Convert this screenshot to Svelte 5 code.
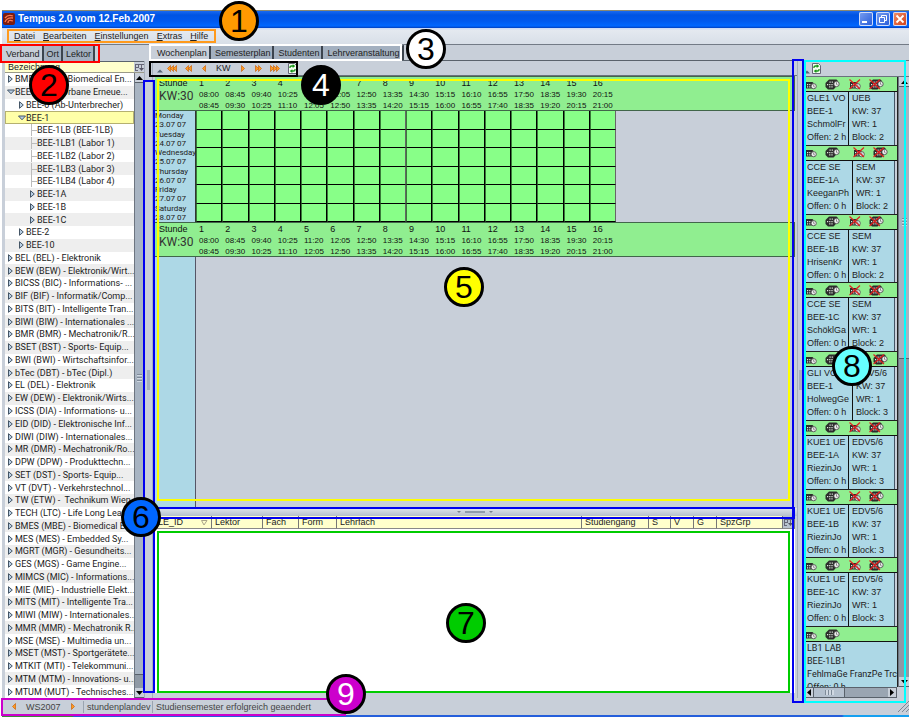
<script>
  const menus = ['Datei', 'Bearbeiten', 'Einstellungen', 'Extras', 'Hilfe'];
  const leftTabs = ['Verband', 'Ort', 'Lektor'];
  const mainTabs = ['Wochenplan', 'Semesterplan', 'Studenten', 'Lehrveranstaltung'];

  const tree = [
    [0, 'closed', 'BME (BME) - Biomedical En...'],
    [0, 'open', 'BEE (BEE) - Urbane Erneue...'],
    [1, 'closed', 'BEE-0 (Ab-Unterbrecher)'],
    [1, 'open', 'BEE-1'],
    [2, 'leaf', 'BEE-1LB (BEE-1LB)'],
    [2, 'leaf', 'BEE-1LB1 (Labor 1)'],
    [2, 'leaf', 'BEE-1LB2 (Labor 2)'],
    [2, 'leaf', 'BEE-1LB3 (Labor 3)'],
    [2, 'leaf', 'BEE-1LB4 (Labor 4)'],
    [2, 'closed', 'BEE-1A'],
    [2, 'closed', 'BEE-1B'],
    [2, 'closed', 'BEE-1C'],
    [1, 'closed', 'BEE-2'],
    [1, 'closed', 'BEE-10'],
    ...[
      'BEL (BEL) - Elektronik',
      'BEW (BEW) - Elektronik/Wirt...',
      'BICSS (BIC) - Informations- ...',
      'BIF (BIF) - Informatik/Comp...',
      'BITS (BIT) - Intelligente Tran...',
      'BIWI (BIW) - Internationales ...',
      'BMR (BMR) - Mechatronik/R...',
      'BSET (BST) - Sports- Equip...',
      'BWI (BWI) - Wirtschaftsinfor...',
      'bTec (DBT) - bTec (Dipl.)',
      'EL (DEL) - Elektronik',
      'EW (DEW) - Elektronik/Wirts...',
      'ICSS (DIA) - Informations- u...',
      'EID (DID) - Elektronische Inf...',
      'DIWI (DIW) - Internationales...',
      'MR (DMR) - Mechatronik/Ro...',
      'DPW (DPW) - Produkttechn...',
      'SET (DST) - Sports- Equip...',
      'VT (DVT) - Verkehrstechnol...',
      'TW (ETW) -  Technikum Wien',
      'TECH (LTC) - Life Long Lea...',
      'BMES (MBE) - Biomedical E...',
      'MES (MES) - Embedded Sy...',
      'MGRT (MGR) - Gesundheits...',
      'GES (MGS) - Game Engine...',
      'MIMCS (MIC) - Informations...',
      'MIE (MIE) - Industrielle Elekt...',
      'MITS (MIT) - Intelligente Tra...',
      'MIWI (MIW) - Internationales...',
      'MMR (MMR) - Mechatronik R...',
      'MSE (MSE) - Multimedia un...',
      'MSET (MST) - Sportgerätete...',
      'MTKIT (MTI) - Telekommuni...',
      'MTM (MTM) - Innovations- u...',
      'MTUM (MUT) - Technisches...'
    ].map((t) => [0, 'closed', t])
  ];

  const hours = [
    ['08:00', '08:45'], ['08:45', '09:30'], ['09:40', '10:25'], ['10:25', '11:10'],
    ['11:20', '12:05'], ['12:05', '12:50'], ['12:50', '13:35'], ['13:35', '14:20'],
    ['14:30', '15:15'], ['15:15', '16:00'], ['16:10', '16:55'], ['16:55', '17:40'],
    ['17:50', '18:35'], ['18:35', '19:20'], ['19:30', '20:15'], ['20:15', '21:00']
  ];

  const days = [
    ['Monday', '23.07 07'], ['Tuesday', '24.07 07'], ['Wednesday', '25.07 07'],
    ['Thursday', '26.07 07'], ['Friday', '27.07 07'], ['Saturday', '28.07 07']
  ];

  const columns = [
    ['LE_ID', 57], ['Lektor', 51], ['Fach', 36], ['Form', 38], ['Lehrfach', 0],
    ['Studiengang', 67], ['S', 22], ['V', 23], ['G', 23], ['SpzGrp', 66]
  ];

  const cards = [
    { l: ['GLE1 VO', 'BEE-1', 'SchmölFr', 'Offen: 2 h'], r: ['UEB', 'KW: 37', 'WR: 1', 'Block: 2'] },
    { l: ['CCE SE', 'BEE-1A', 'KeeganPh', 'Offen: 0 h'], r: ['SEM', 'KW: 37', 'WR: 1', 'Block: 2'], wide: true },
    { l: ['CCE SE', 'BEE-1B', 'HrisenKr', 'Offen: 0 h'], r: ['SEM', 'KW: 37', 'WR: 1', 'Block: 2'] },
    { l: ['CCE SE', 'BEE-1C', 'SchöklGa', 'Offen: 0 h'], r: ['SEM', 'KW: 37', 'WR: 1', 'Block: 2'] },
    { l: ['GLI VO', 'BEE-1', 'HolwegGe', 'Offen: 0 h'], r: ['EDV5/6', 'KW: 37', 'WR: 1', 'Block: 3'], wide: true },
    { l: ['KUE1 UE', 'BEE-1A', 'RiezinJo', 'Offen: 0 h'], r: ['EDV5/6', 'KW: 37', 'WR: 1', 'Block: 3'] },
    { l: ['KUE1 UE', 'BEE-1B', 'RiezinJo', 'Offen: 0 h'], r: ['EDV5/6', 'KW: 37', 'WR: 1', 'Block: 3'] },
    { l: ['KUE1 UE', 'BEE-1C', 'RiezinJo', 'Offen: 0 h'], r: ['EDV5/6', 'KW: 37', 'WR: 1', 'Block: 3'] },
    { l: ['LB1 LAB', 'BEE-1LB1', 'FehlmaGe FranzPe Trck', 'Offen: 0 h'] }
  ];
</script>

{#snippet arrows(n, dir)}
  <svg width={n * 3 + 1} height="7" viewBox="0 0 {n * 3 + 1} 7" aria-hidden="true">
    <g transform={dir === 'right' ? `translate(${n * 3 + 1} 0) scale(-1 1)` : ''}>
      {#each Array(n) as _, i}
        <path d="M{i * 3 + 3.5} .5 L{i * 3 + 0.5} 3.5 L{i * 3 + 3.5} 6.5 Z" fill="#ff9a20" stroke="#c86410" stroke-width=".7" />
      {/each}
    </g>
  </svg>
{/snippet}

{#snippet refresh()}
  <svg width="9" height="11" viewBox="0 0 9 11" aria-hidden="true">
    <path d="M.5 .5h6l2 2v8h-8z" fill="#f4fff0" stroke="#667" />
    <path d="M2 5V4q0-1 1.5-1H5" fill="none" stroke="#169516" stroke-width="1.3" />
    <path d="M4.7 1.2l2.6 1.9-2.6 1.8z" fill="#169516" />
    <path d="M7 6v1q0 1-1.5 1H4" fill="none" stroke="#169516" stroke-width="1.3" />
    <path d="M4.3 6.2L1.7 8l2.6 1.9z" fill="#169516" />
  </svg>
{/snippet}

{#snippet gridIcon()}
  <svg width="9" height="7" viewBox="0 0 9 7" aria-hidden="true">
    <path d="M0 .5h9M0 3.5h4M.5 0v6M3.5 0v4M6.500 0v4M0 6.500h3" stroke="#667" fill="none" />
    <path d="M4 4h5l-2.500 3z" fill="#556" />
  </svg>
{/snippet}

{#snippet calIcon(multi, crossed)}
  <svg width="15" height="11" viewBox="0 0 15 11" aria-hidden="true">
    {#if multi}
      <path d="M4 .5h7.500l1 1V6L9.500 9.500 8.500 10.500H3L.5 8V4z" fill="#2c2c2c" />
      <path d="M2 5h1.200v1.200H2zM4.200 5h1.200v1.200H4.200zM6.400 5h1.200v1.200H6.400zM4.200 7.300h1.200v1.200H4.200zM6.400 7.300h1.200v1.200H6.400zM4.500 2.500h1.200v1.200H4.500zM6.700 2.500h1.200v1.200H6.700z" fill="#dfe8df" />
      <circle cx="11.500" cy="5" r="2.700" fill="#eee" stroke="#444" stroke-width=".8" />
      <path d="M11.500 3.300v2l1.200 .6" fill="none" stroke="#444" stroke-width=".6" />
    {:else}
      <path d="M1 3h6.500l1 1v5.500H1z" fill="#2c2c2c" />
      <path d="M2 5h1.200v1.200H2zM4.200 5h1.200v1.200H4.200zM2 7.300h1.200v1.200H2zM4.200 7.300h1.200v1.200H4.200z" fill="#dfe8df" />
      <circle cx="8.700" cy="7.200" r="2.600" fill="#eee" stroke="#444" stroke-width=".8" />
      <path d="M8.700 5.500v2l1.200 .6" fill="none" stroke="#444" stroke-width=".6" />
    {/if}
    {#if crossed}
      <path d="M.5 .5L11 10M11 .5L.5 10" stroke="#e02020" stroke-width="1.200" />
    {/if}
  </svg>
{/snippet}

{#snippet weekHead()}
  <div class="week">
    <div class="week-label"><span>Stunde</span><b>KW:30</b></div>
    <div class="hours">
      {#each hours as [from, to], i}
        <div><span>{i + 1}</span><small>{from}</small><small>{to}</small></div>
      {/each}
    </div>
  </div>
{/snippet}

<div class="page">
  <header class="title">
    <svg width="12" height="12" viewBox="0 0 12 12" aria-hidden="true">
      <rect width="12" height="12" rx="2" fill="#7c1c10" />
      <path d="M2 5q3-4 8-2M2 9q2-5 8-4M5 10q0-4 5-2" fill="none" stroke="#ff7a50" stroke-width="1.300" />
    </svg>
    <h1>Tempus 2.0 vom 12.Feb.2007</h1>
    <button class="win" aria-label="Minimieren"><svg width="14" height="14" viewBox="0 0 14 14"><path d="M3 10h5" stroke="#fff" stroke-width="2" /></svg></button>
    <button class="win" aria-label="Wiederherstellen"><svg width="14" height="14" viewBox="0 0 14 14"><path d="M5.500 5V3.500h5v5H9M3.500 5.500h5v5h-5z" fill="none" stroke="#fff" /></svg></button>
    <button class="win close" aria-label="Schließen"><svg width="14" height="14" viewBox="0 0 14 14"><path d="M3.500 3.500l7 7M10.500 3.500l-7 7" stroke="#fff" stroke-width="1.800" /></svg></button>
  </header>

  <nav class="menu">
    {#each menus as m}
      <button><u>{m[0]}</u>{m.slice(1)}</button>
    {/each}
  </nav>

  <main>
    <section class="left">
      <div class="tabs">
        {#each leftTabs as t, i}<button class:on={i === 0}>{t}</button>{/each}
      </div>
      <div class="tree-head"><span>Bezeichnung</span><button aria-label="Spalten">{@render gridIcon()}</button></div>
      <div class="tree-wrap">
        <ul class="tree">
          {#each tree as [level, kind, text], i}
            <li class="l{level}" class:sel={i === 3}>
              {#if kind === 'closed'}
                <svg width="8" height="8" viewBox="0 0 8 8" aria-hidden="true"><path d="M1.500 .7v6.600L5.300 4z" fill="#b8cfe5" stroke="#456" /></svg>
              {:else if kind === 'open'}
                <svg width="8" height="8" viewBox="0 0 8 8" aria-hidden="true"><path d="M.5 2h7L4 5.800z" fill="#b8cfe5" stroke="#456" /></svg>
              {:else}
                <svg width="8" height="12" viewBox="0 0 8 12" aria-hidden="true"><path d="M2.500 0v12M2.500 6.500H8" fill="none" stroke="#bbb" /></svg>
              {/if}
              <span>{text}</span>
            </li>
          {/each}
        </ul>
        <div class="vbar">
          <button aria-label="Nach oben"><svg width="7" height="4"><path d="M0 4h7L3.500 0z" /></svg></button>
          <i class="thumb long"></i><i class="track"></i>
          <button aria-label="Nach unten"><svg width="7" height="4"><path d="M0 0h7L3.500 4z" /></svg></button>
        </div>
      </div>
    </section>

    <div class="split v"><i></i></div>

    <section class="center">
      <div class="tabs">
        {#each mainTabs as t, i}<button class:on={i === 0}>{t}</button>{/each}
      </div>
      <div class="tools">
        <svg width="6" height="5" aria-hidden="true"><path d="M0 4.500h6L3 1.500z" fill="#567" /></svg>
        <button aria-label="Vier Wochen zurück">{@render arrows(3, 'left')}</button>
        <button aria-label="Zwei Wochen zurück">{@render arrows(2, 'left')}</button>
        <button class="one" aria-label="Woche zurück">{@render arrows(1, 'left')}</button>
        <span>KW</span>
        <button class="one" aria-label="Woche vor">{@render arrows(1, 'right')}</button>
        <button aria-label="Zwei Wochen vor">{@render arrows(2, 'right')}</button>
        <button aria-label="Vier Wochen vor">{@render arrows(3, 'right')}</button>
        <button aria-label="Neu laden">{@render refresh()}</button>
      </div>
      <div class="plan">
        {@render weekHead()}
        <table class="slots">
          <tbody>
            {#each days as [name, date]}
              <tr>
                <th scope="row"><span>{name}</span>{date}</th>
                {#each hours as _, i}<td class:mid={i === 7 || i === 15}></td>{/each}
              </tr>
            {/each}
          </tbody>
        </table>
        {@render weekHead()}
        <div class="rest"></div>
      </div>
      <div class="split h">
        <svg width="36" height="4" aria-hidden="true"><path d="M0 1h4L2 3zM32 1h4l-2 2z" fill="#78828e" /><path d="M8 2h20" stroke="#8f9baa" stroke-width="2" /></svg>
      </div>
      <div class="lessons">
        <table>
          <thead>
            <tr>
              {#each columns as [name, width], i}
                <th scope="col" style:width={width ? `${width}px` : 'auto'}>
                  {name}
                  {#if i === 0}<svg width="7" height="6" aria-hidden="true"><path d="M.5 .5h5.500L3 5z" fill="none" stroke="#aaa58a" /></svg>{/if}
                </th>
              {/each}
              <th class="ctl"><button aria-label="Spalten">{@render gridIcon()}</button></th>
            </tr>
          </thead>
        </table>
      </div>
    </section>

    <div class="split v"><i></i></div>

    <section class="right">
      <div class="tools">
        <svg width="6" height="5" aria-hidden="true"><path d="M0 4.500h6L3 1.500z" fill="#567" /></svg>
        <button aria-label="Neu laden">{@render refresh()}</button>
      </div>
      <div class="cards-wrap">
        <div class="cards">
          {#each cards as c}
            <article class:wide={c.wide} class:single={!c.r}>
              <div class="icons">
                <span>{@render calIcon(false, false)}{@render calIcon(true, false)}</span>
                {#if c.r}<span>{@render calIcon(false, true)}{@render calIcon(true, true)}</span>{/if}
              </div>
              <div class="cells">
                <div>{#each c.l as t}<p>{t}</p>{/each}</div>
                {#if c.r}<div>{#each c.r as t}<p>{t}</p>{/each}</div>{/if}
              </div>
            </article>
          {/each}
        </div>
        <div class="vbar">
          <button aria-label="Nach oben"><svg width="7" height="4"><path d="M0 4h7L3.500 0z" /></svg></button>
          <i class="thumb half"></i><i class="track grow"></i>
          <button aria-label="Nach unten"><svg width="7" height="4"><path d="M0 0h7L3.500 4z" /></svg></button>
        </div>
      </div>
      <div class="hbar">
        <button aria-label="Nach links"><svg width="4" height="7"><path d="M4 0v7L0 3.500z" /></svg></button>
        <i class="thumb"></i><i class="track"></i>
        <button aria-label="Nach rechts"><svg width="4" height="7"><path d="M0 0v7l4-3.500z" /></svg></button>
      </div>
    </section>
  </main>

  <footer>
    <div class="sem">
      <button aria-label="Voriges Semester">{@render arrows(1, 'left')}</button>
      <span>WS2007</span>
      <button aria-label="Nächstes Semester">{@render arrows(1, 'right')}</button>
    </div>
    <div class="db">stundenplandev</div>
    <div class="msg">Studiensemester erfolgreich geaendert</div>
    <svg width="11" height="11" aria-hidden="true"><path d="M11 0L0 11M11 4L4 11M11 8l-3 3" stroke="#7d8793" /></svg>
  </footer>
  <div class="taskbar"></div>

  <div class="frame f1"></div>
  <div class="frame f2"></div>
  <div class="frame f3"></div>
  <div class="frame f4"></div>
  <div class="frame f5"></div>
  <div class="frame f7"></div>
  <div class="frame f6 a"></div>
  <div class="frame f6 b"></div>
  <div class="frame f6 c"></div>
  <div class="frame f8"></div>
  <div class="frame f9"></div>
  {#each [1, 2, 3, 4, 5, 6, 7, 8, 9] as n}
    <div class="mark m{n}">{n}</div>
  {/each}
</div>

<style>
  :global(body) { margin: 0; background: #fff; }
  * { box-sizing: border-box; }
  button { border: 0; padding: 0; margin: 0; background: none; font: inherit; color: inherit; display: flex; align-items: center; justify-content: center; }
  svg { display: block; flex: none; }
  p, ul, h1 { margin: 0; padding: 0; }

  .page {
    position: relative;
    min-height: 100vh;
    padding: 10px 0 0 2px;
    display: flex;
    flex-direction: column;
    font: 9px/12px "Liberation Sans", Arial, sans-serif;
    color: #222;
    overflow: hidden;
  }

  .title { display: flex; align-items: center; gap: 3px; height: 18px; padding: 0 2px 0 1px; background: linear-gradient(#8a8872 0 1px, #1a6af0 1px, #0054e3 5px, #0058ee 11px, #0066ff 16px, #003dbd); }
  .title h1 { flex: 1; font: bold 10px/14px "Liberation Sans", Arial, sans-serif; color: #fff; }
  .win { width: 14px; height: 14px; border-radius: 2px; background: linear-gradient(135deg, #7ba0f0, #2458d8); box-shadow: inset 0 0 0 1px #cfdcfa; }
  .win.close { background: linear-gradient(135deg, #f0906c, #d03c14); }

  .menu { display: flex; align-items: center; gap: 8px; height: 17px; padding-left: 12px; background: linear-gradient(#cfdaf5 0 1px, #e4e9f0 2px, #d8dfe8); border-bottom: 1px solid #737b86; }

  main { flex: 1; display: grid; grid-template-columns: 142px 9px 1fr 7px 105px; background: #c8cfd9; }
  section { display: flex; flex-direction: column; min-width: 0; }

  .tabs { display: flex; height: 16px; border-bottom: 1px solid #5a626c; }
  .tabs button { padding: 0 2px 0 4px; border-right: 2px solid #3c444e; border-top: 1px solid #707986; background: #a3b0c0; }
  .tabs button.on { background: #c8cfd9; }
  .left .tabs { height: 17px; }
  .left .tabs button { padding-left: 3px; }
  .left { padding-left: 1px; }

  .tree-head { display: flex; height: 11px; line-height: 11px; margin-left: 2px; background: #ffffcc; border-bottom: 1px solid #9a9a88; }
  .tree-head span { flex: 1; padding-left: 3px; }
  .tree-head button { width: 10px; background: #c8cfd9; }
  .tree-wrap { flex: 1; display: grid; grid-template-columns: 1fr 10px; margin-left: 2px; }
  .tree { display: grid; grid-auto-rows: 1fr; background: #fff; overflow: hidden; list-style: none; font-family: Roboto, sans-serif; }
  .tree li { display: flex; align-items: center; padding-left: 2px; white-space: pre; overflow: hidden; line-height: 12px; }
  .tree li:nth-child(even) { background: #eee; }
  .tree li.l1 { padding-left: 13px; }
  .tree li.l2 { padding-left: 24px; }
  .tree li.sel { background: #ffffa8; box-shadow: inset 0 0 0 1px #b5b070; }

  .vbar { display: flex; flex-direction: column; background: #8f99a5; border-left: 1px solid #6d7580; }
  .vbar button { height: 10px; background: #c8cfd9; border-bottom: 1px solid #59616b; }
  .thumb { background: repeating-linear-gradient(#7f8b99 0 1px, #d0d8e2 1px 2px, #a8b4c2 2px 3px) center / 5px 9px no-repeat #a8b4c2; border-bottom: 1px solid #59616b; }
  .thumb.long { flex: 1; }
  .thumb.half { flex: 275; }
  .track { height: 13px; }
  .track.grow { flex: 322; height: auto; }

  .split { display: flex; align-items: center; justify-content: center; background: #c8cfd9; }
  .split.v { margin-top: 16px; border-left: 1px solid #a5afbb; border-right: 1px solid #a5afbb; }
  .split.v i { width: 3px; height: 20px; background: #a5b0be; }
  .split.h { height: 8px; background: linear-gradient(#e0e5ec, #b5bfcb); }

  .tools { display: flex; align-items: center; height: 15px; border-bottom: 1px solid #6a727c; }
  .tools > svg { align-self: flex-end; margin-bottom: 2px; }
  .tools .one { padding: 0 2px; }
  .center .tools { padding-left: 4px; gap: 8px; }
  .center .tools > svg { margin-right: -4px; }
  .right .tools { margin-top: 15px; border-top: 1px solid #6a727c; height: 17px; gap: 2px; }

  .plan { flex: 1; display: flex; flex-direction: column; padding-left: 2px; }
  .week { display: grid; grid-template-columns: 41px 1fr; height: 35px; margin-right: 2px; background: #90ee90; border: 1px solid #41664a; border-left: 0; color: #111; }
  .week-label { padding-left: 4px; }
  .week-label span { display: block; line-height: 12px; }
  .week-label b { display: block; font: 12px/14px Roboto, sans-serif; color: #333; }
  .hours { display: grid; grid-template-columns: repeat(16, 1fr); width: 420px; }
  .hours div { padding-left: 3px; }
  .hours span { display: block; line-height: 12px; }
  .hours small { display: block; font-size: 8px; line-height: 11px; }
  .slots { border-collapse: separate; border-spacing: 0; table-layout: fixed; width: 461px; height: 111px; }
  .slots th { width: 41px; padding: 0; text-align: left; font: 8px/9px Roboto, sans-serif; background: #add8e6; border-right: 1px solid #333; }
  .slots th span { display: block; }
  .slots td { padding: 0; background: #88ff88; border: 1px solid #000; border-left-color: #3a7a3a; border-top: 0; }
  .slots td.mid { border-right-color: #666; }
  .rest { flex: 1; width: 41px; background: #add8e6; border-right: 1px solid #556; }

  .lessons { height: 177px; margin: 0 2px 5px; background: #fff; }
  .lessons table { width: 100%; border-collapse: separate; border-spacing: 0; table-layout: fixed; }
  .lessons th { height: 13px; padding: 1px 0 0 3px; line-height: 11px; text-align: left; font-weight: normal; white-space: nowrap; background: #ffffcc; border-right: 1px solid #777; border-bottom: 1px solid #888; }
  .lessons th svg { float: right; margin: 3px 3px 0 0; }
  .lessons th.ctl { width: 12px; padding: 0 1px; background: #b8c2ce; }
  .lessons th.ctl svg { float: none; margin: 0; }

  .cards-wrap { flex: 1; display: grid; grid-template-columns: 1fr 11px; }
  .cards { display: flex; flex-direction: column; overflow: hidden; }
  article { flex: 1 1 0; display: flex; flex-direction: column; border: 1px solid #222; border-width: 0 1px 1px 0; background: #c8cfd9; }
  .icons { flex: none; display: grid; grid-template-columns: 44px 1fr; height: 15px; background: #90ee90; border-bottom: 1px solid #111; align-items: center; }
  .icons span { display: flex; gap: 5px; padding-left: 1px; }
  .wide .icons, .wide .cells { grid-template-columns: 48px 1fr; }
  .cells { flex: 1; display: grid; grid-template-columns: 44px 1fr; margin-right: 2px; background: #add8e6; }
  .cells div { padding-left: 3px; white-space: nowrap; line-height: 13px; }
  .cells div:nth-child(2) { border-left: 1px solid #111; border-right: 1px solid #456; }
  article.single { flex: 0 0 60px; overflow: hidden; border-bottom: 0; }
  .single .cells { grid-template-columns: 1fr; margin: 0; font-family: Roboto, sans-serif; }
  .hbar { display: flex; height: 11px; margin-right: 12px; background: #9aa5b2; border: 1px solid #59616b; }
  .hbar button { width: 8px; background: #c8cfd9; }
  .hbar .thumb { width: 32px; border: 0; border-right: 1px solid #59616b; border-left: 1px solid #59616b; background: repeating-linear-gradient(90deg, #7f8b99 0 1px, #d0d8e2 1px 3px) center / 9px 5px no-repeat #b4c0ce; }
  .hbar .track { flex: 1; height: auto; }

  footer { display: flex; align-items: center; height: 17px; padding-left: 10px; background: #c8cfd9; color: #444; }
  .sem { display: flex; align-items: center; gap: 10px; width: 72px; border-right: 1px solid #9aa4b0; }
  .db { width: 69px; padding-left: 3px; border-right: 1px solid #9aa4b0; }
  .msg { flex: 1; padding-left: 3px; }
  .taskbar { height: 2px; background: linear-gradient(90deg, #3c8a3c 70px, #245edb 72px, #245edb 840px, #14a0f0 842px); }

  .frame { position: absolute; border: 2px solid; pointer-events: none; }
  .f1 { left: 7px; top: 29px; width: 209px; height: 14px; border-color: #ff9a1c; }
  .f2 { left: 0; top: 44px; width: 100px; height: 19px; border-color: #f00; }
  .f3 { left: 149px; top: 44px; width: 253px; height: 17px; border-color: #fff; }
  .f4 { left: 149px; top: 61px; width: 149px; height: 16px; border-color: #000; }
  .f5 { left: 157px; top: 79px; right: 119px; bottom: 216px; border-color: #ff0; }
  .f7 { left: 157px; bottom: 24px; right: 119px; height: 162px; border-color: #0c0; }
  .f6 { border-color: #0000f0; }
  .f6.a { left: 143px; top: 80px; width: 12px; bottom: 24px; }
  .f6.b { left: 153px; right: 114px; height: 12px; bottom: 198px; }
  .f6.c { right: 105px; top: 59px; width: 12px; bottom: 14px; }
  .f8 { right: 3px; top: 60px; width: 102px; bottom: 14px; border-color: #0ff; }
  .f9 { left: 1px; width: 345px; bottom: 1px; height: 18px; border-color: #c0c; }

  .mark { position: absolute; display: flex; align-items: center; justify-content: center; width: 40px; height: 40px; border: 3px solid #000; border-radius: 50%; font-size: 32px; line-height: 32px; color: #000; }
  .m1 { left: 219px; top: 1px; background: #f90; }
  .m2 { left: 29px; top: 65px; background: #f00; }
  .m3 { left: 406px; top: 29px; background: #fff; }
  .m4 { left: 301px; top: 65px; background: #000; color: #fff; }
  .m5 { left: 444px; top: 267px; background: #ff0; }
  .m6 { left: 121px; top: 497px; background: #06f; }
  .m7 { left: 446px; top: 603px; background: #0c0; }
  .m8 { left: 832px; top: 346px; background: #6ff; }
  .m9 { left: 326px; top: 674px; background: #c0c; color: #fff; }
</style>
